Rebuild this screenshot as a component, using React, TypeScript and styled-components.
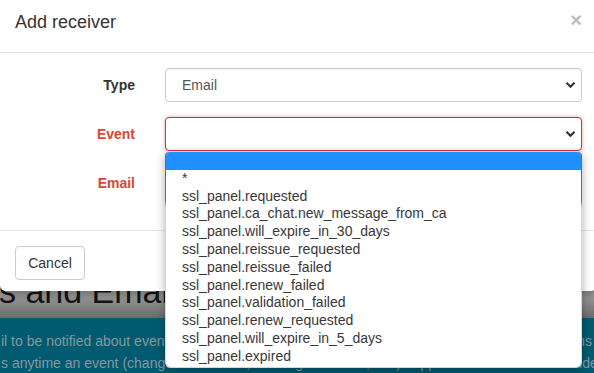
import styled, { createGlobalStyle } from 'styled-components'

const EVENTS = [
  '',
  '*',
  'ssl_panel.requested',
  'ssl_panel.ca_chat.new_message_from_ca',
  'ssl_panel.will_expire_in_30_days',
  'ssl_panel.reissue_requested',
  'ssl_panel.reissue_failed',
  'ssl_panel.renew_failed',
  'ssl_panel.validation_failed',
  'ssl_panel.renew_requested',
  'ssl_panel.will_expire_in_5_days',
  'ssl_panel.expired',
]

const Chevron = () => (
  <svg width="11" height="8" viewBox="0 0 11 8">
    <polyline points="1.5,1.8 5.5,5.8 9.5,1.8" fill="none" stroke="#333" strokeWidth="2.2" />
  </svg>
)

function App() {
  return (
    <Viewport>
      <GlobalStyle />
      <Page>
        <HeadingZone>
          <PageTitle>s and Emails receivers</PageTitle>
        </HeadingZone>
        <IntroBand>
          <IntroLine>il to be notified about events in the SSL panel. Receivers get a message from the main systems</IntroLine>
          <IntroLine>s anytime an event (change of the state, message from CA, etc.) happens with a certificate under your account</IntroLine>
        </IntroBand>
      </Page>

      <Modal>
        <ModalHeader>
          <ModalTitle>Add receiver</ModalTitle>
          <CloseButton>×</CloseButton>
        </ModalHeader>
        <ModalBody>
          <FormRow>
            <Label>Type</Label>
            <Select>
              <span>Email</span>
              <Chevron />
            </Select>
          </FormRow>
          <FormRow>
            <Label error>Event</Label>
            <SelectWrap>
              <Select error focused>
                <span />
                <Chevron />
              </Select>
              <OptionsFrame>
                <OptionList>
                  {EVENTS.map((ev, i) => (
                    <Option key={i} selected={i === 0}>{ev}</Option>
                  ))}
                </OptionList>
              </OptionsFrame>
            </SelectWrap>
          </FormRow>
          <FormRow>
            <Label error>Email</Label>
            <TextInput error />
          </FormRow>
        </ModalBody>
        <ModalFooter>
          <Button>Cancel</Button>
          <Button primary>Add</Button>
        </ModalFooter>
      </Modal>
    </Viewport>
  )
}

export default App

const GlobalStyle = createGlobalStyle`
  html, body {
    margin: 0;
    padding: 0;
    background: #6b6b6b;
  }
  body {
    font-family: "Liberation Sans", Arial, sans-serif;
    font-size: 14px;
    color: #333;
  }
`

const Viewport = styled.div`
  position: relative;
  width: 594px;
  height: 373px;
  overflow: hidden;
`

const Page = styled.div`
  display: flex;
  flex-direction: column;
`

const HeadingZone = styled.div`
  height: 318px;
  display: flex;
  flex-direction: column;
  justify-content: flex-end;
  background: linear-gradient(#a5a5a5 0, #a5a5a5 290px, #6a6a6a 318px);
`

const PageTitle = styled.h1`
  margin: 0 0 8px -1px;
  font-size: 34px;
  line-height: 37px;
  font-weight: 400;
  color: #141414;
  white-space: nowrap;
`

const IntroBand = styled.div`
  background: #005b70;
  padding: 12px 0 0 1px;
  height: 60px;
`

const IntroLine = styled.div`
  font-size: 14px;
  line-height: 22px;
  color: #8697a0;
  white-space: nowrap;
`

const Modal = styled.div`
  position: absolute;
  top: 0;
  left: 0;
  width: 597px;
  height: 291px;
  background: #fff;
  border-radius: 0 0 6px 6px;
  box-shadow: 0 3px 9px rgba(0, 0, 0, 0.35);
  display: flex;
  flex-direction: column;
`

const ModalHeader = styled.div`
  display: flex;
  justify-content: space-between;
  align-items: flex-start;
  padding: 10px 15px 17px;
  border-bottom: 1px solid #e5e5e5;
`

const ModalTitle = styled.h4`
  margin: 0;
  font-size: 18px;
  line-height: 25px;
  font-weight: 400;
  color: #333;
`

const CloseButton = styled.span`
  font-size: 20px;
  line-height: 18px;
  font-weight: 700;
  color: #bdbdbd;
  margin-top: 1px;
`

const ModalBody = styled.div`
  display: flex;
  flex-direction: column;
  gap: 15px;
  padding: 15px 15px 30px;
`

const FormRow = styled.div`
  display: grid;
  grid-template-columns: 120px 1fr;
  column-gap: 30px;
  align-items: center;
`

const Label = styled.label<{ error?: boolean }>`
  text-align: right;
  font-weight: 700;
  font-size: 14px;
  color: ${({ error }) => (error ? '#dc4437' : '#333')};
`

const SelectWrap = styled.div`
  position: relative;
`

const Select = styled.div<{ error?: boolean; focused?: boolean }>`
  height: 34px;
  box-sizing: border-box;
  display: flex;
  align-items: center;
  justify-content: space-between;
  padding: 0 5px 0 16px;
  border: 1px solid ${({ error }) => (error ? '#c63a2e' : '#cccccc')};
  border-radius: 4px;
  background: #fff;
  color: #555;
  font-size: 14px;
  box-shadow: ${({ focused }) => (focused ? '0 0 4px rgba(206, 70, 60, 0.45)' : 'inset 0 1px 1px rgba(0,0,0,0.04)')};
`

const TextInput = styled.div<{ error?: boolean }>`
  height: 34px;
  box-sizing: border-box;
  border: 1px solid ${({ error }) => (error ? '#c63a2e' : '#cccccc')};
  border-radius: 4px;
  background: #fff;
`

const OptionsFrame = styled.div`
  position: absolute;
  top: 35px;
  left: 0;
  right: 0;
  z-index: 5;
  padding: 0 1px 1px;
  border-radius: 4px 4px 6px 6px;
  background: linear-gradient(#c2473d 0, #c2473d 48px, #d6d6d6 56px);
  box-shadow: 0 2px 10px rgba(0, 0, 0, 0.32);
`

const OptionList = styled.div`
  background: #fff;
  border-radius: 4px 4px 6px 6px;
  overflow: hidden;
  padding-bottom: 1px;
`

const Option = styled.div<{ selected?: boolean }>`
  height: 17.8px;
  line-height: 17.8px;
  padding-left: 16px;
  font-size: 14px;
  color: #383838;
  white-space: nowrap;
  background: ${({ selected }) => (selected ? '#1e90ff' : 'transparent')};
`

const ModalFooter = styled.div`
  display: flex;
  justify-content: space-between;
  padding: 15px 15px 11px;
  border-top: 1px solid #e5e5e5;
`

const Button = styled.button<{ primary?: boolean }>`
  height: 34px;
  padding: 0 12px;
  min-width: 70px;
  border-radius: 4px;
  font-family: "Liberation Sans", Arial, sans-serif;
  font-size: 14px;
  border: 1px solid ${({ primary }) => (primary ? '#2e6da4' : '#cccccc')};
  background: ${({ primary }) => (primary ? '#337ab7' : '#fff')};
  color: ${({ primary }) => (primary ? '#fff' : '#333')};
`
